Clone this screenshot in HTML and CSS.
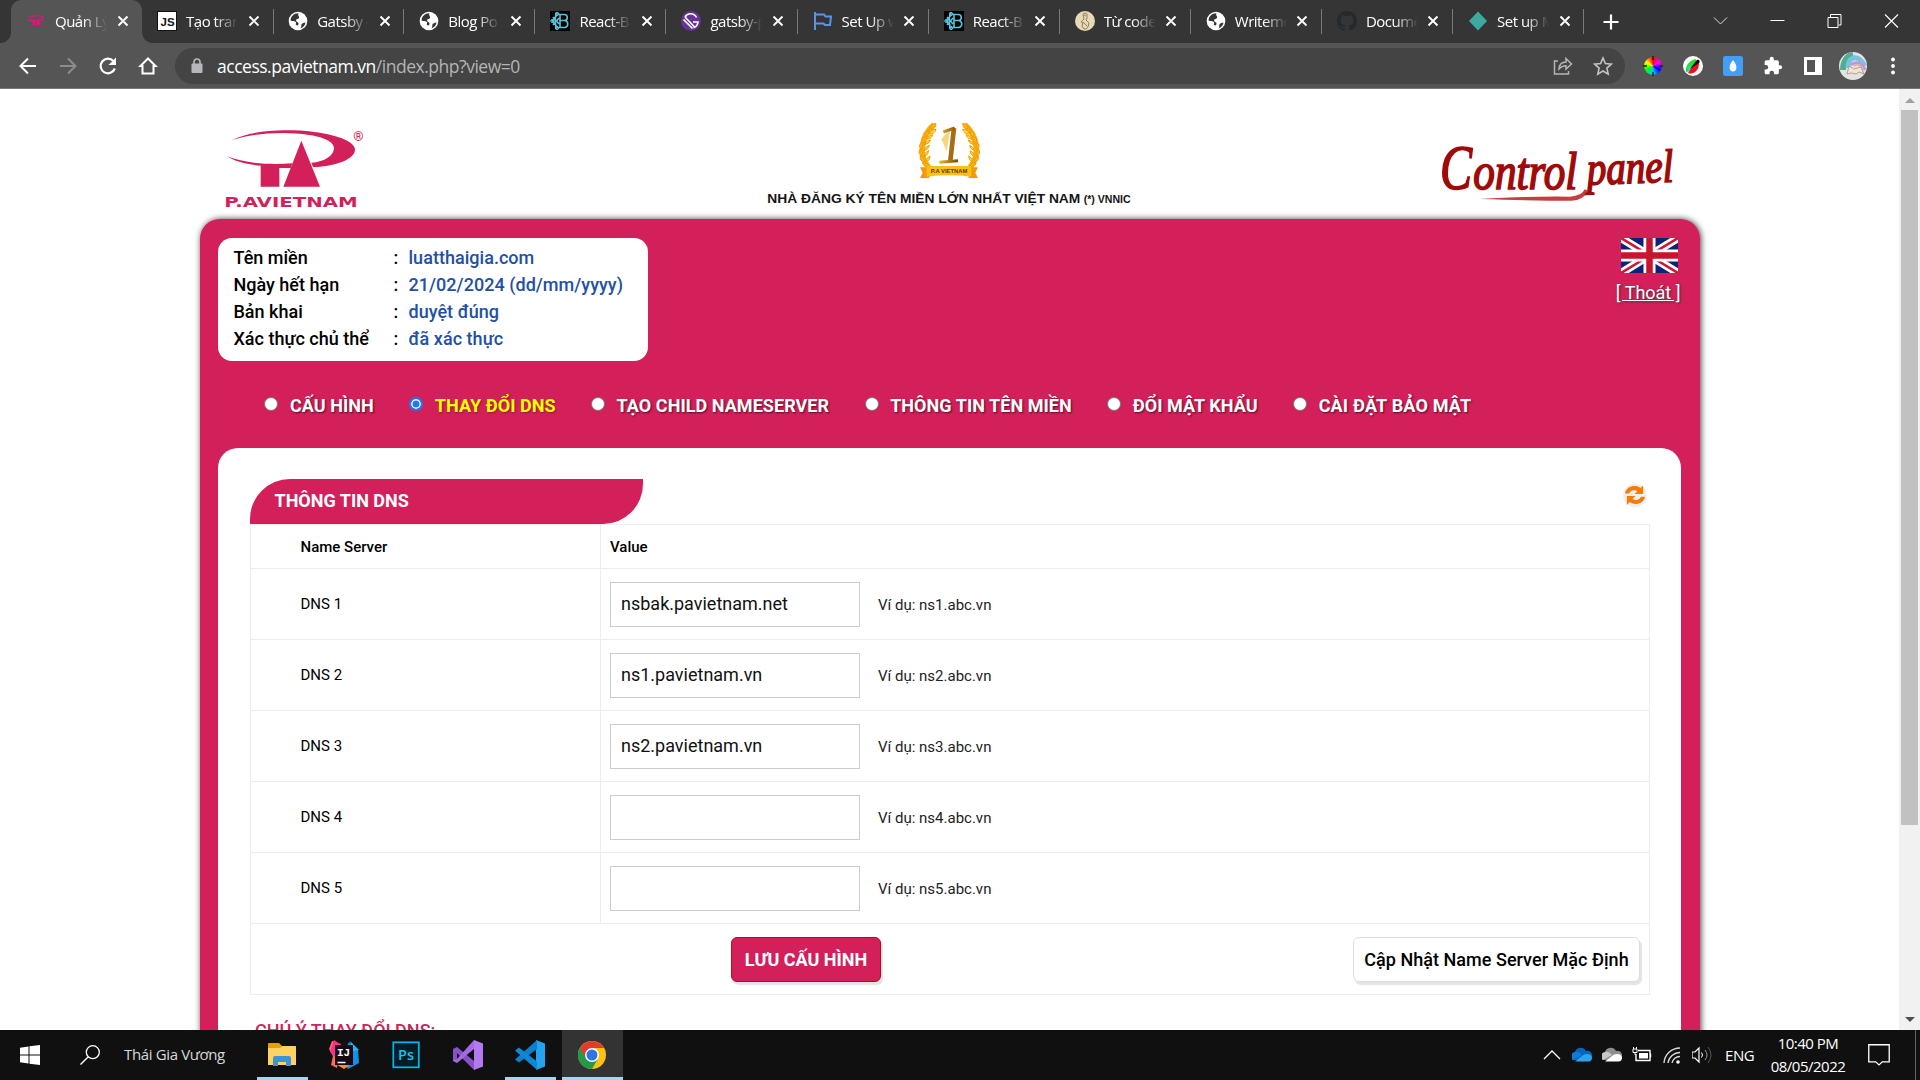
FILE: index.html
```html
<!DOCTYPE html>
<html lang="vi">
<head>
<meta charset="utf-8">
<title>Quản Lý</title>
<link rel="stylesheet" href="styles.css">
</head>
<body>
<svg class="defs" width="0" height="0">
  <symbol id="x" viewBox="0 0 12 12"><path d="M1.5 1.5l9 9M10.500 1.500l-9 9" stroke="#fff" stroke-width="1.9"/></symbol>
  <symbol id="globe" viewBox="0 0 20 20"><circle cx="10" cy="10" r="9.300" fill="#fff"/><path d="M10.500 2.200C6 2 2.500 5.500 2.600 9.500c1.500 1 3.600.3 5 1.300 1.500 1-.6 2.200.6 3.200 1 .7 2.300.6 2.300-1.500 0-1.700-2.500-1.500-2.400-3.300.1-1.800 2.800-.8 3-2.700.2-1.500-1.800-2.300-.6-4.300zM12.500 17.500c2.500-.8 4.700-3.200 5-6-1.500.6-3 .4-3.800 1.500-1 1.500.3 2.800-1.200 4.500z" fill="#353535"/></symbol>
  <symbol id="rb" viewBox="0 0 20 20"><path d="M0 0h20v20H0z" fill="#000"/><path d="M10 3.500h4.300a3 3 0 0 1 0 6H10zM10 9.500h5a3.600 3.600 0 0 1 0 7h-5zM10 3.500L6 2.600 5 9l1 8 4-.5M6.500 5L2 9.800l4.500 5M3 6l6 7M3 14l6-7" fill="none" stroke="#58c4dc" stroke-width="1.600"/><circle cx="7" cy="3" r="1.700" fill="none" stroke="#58c4dc"/><circle cx="7" cy="17" r="1.700" fill="none" stroke="#58c4dc"/><circle cx="2.200" cy="10" r="1.500" fill="none" stroke="#58c4dc"/></symbol>
  <symbol id="leaves" viewBox="0 0 80 150"><path d="M52 8C14 40 4 100 36 136" fill="none" stroke="#f7ae14" stroke-width="17"/><g fill="#fbb615" stroke="#f09d08" stroke-width="3"><path d="M58 4q-20 4-15 18q14-3 15-18zM42 14q-10 10 0 20q8-10 0-20zM34 26q-14 6-6 20q10-8 6-20zM22 44q-12 10 0 20q8-10 0-20zM16 62q-14 8-2 20q8-8 2-20zM10 82q-8 14 6 20q6-12-6-20zM12 102q-6 14 12 18q2-12-12-18zM18 122q0 12 20 12q-4-12-20-12z"/><path d="M58 22q-16 0-20 14q16 0 20-14zM48 38q-14 2-18 14q16-2 18-14zM42 54q-14 2-18 14q14-2 18-14zM38 70q-12 4-16 16q14-4 16-16zM36 86q-12 4-14 18q14-6 14-18zM40 102q-12 6-12 18q12-4 12-18z" fill="#ffdf3c"/></g></symbol>
</svg>

<header class="tabstrip">
  <div class="tab active">
    <svg class="fav" viewBox="0 0 20 20"><path d="M3 6.500c5-2.500 14-2.500 14 .7 0 3-8 3.600-15 1.800" fill="none" stroke="#e2157e" stroke-width="1.300"/><path d="M6.500 9h2.500v5H6.500zM10 14l2.200-7 2.800 7z" fill="#e2157e"/><path d="M2 16h16" stroke="#a02868"/></svg>
    <span class="label">Quản Lý</span><svg class="close"><use href="#x"/></svg>
  </div>
  <div class="tab plain">
    <svg class="fav" viewBox="0 0 20 20"><rect x=".5" y=".5" width="19" height="19" fill="#fff" stroke="#111"/><text x="3.500" y="14.500" font-size="11.500" font-weight="700" font-family="Liberation Sans,sans-serif" fill="#111">JS</text></svg>
    <span class="label">Tạo tran</span><svg class="close"><use href="#x"/></svg>
  </div>
  <div class="tab"><svg class="fav"><use href="#globe"/></svg><span class="label">Gatsby -</span><svg class="close"><use href="#x"/></svg></div>
  <div class="tab"><svg class="fav"><use href="#globe"/></svg><span class="label">Blog Po</span><svg class="close"><use href="#x"/></svg></div>
  <div class="tab"><svg class="fav"><use href="#rb"/></svg><span class="label">React-B</span><svg class="close"><use href="#x"/></svg></div>
  <div class="tab">
    <svg class="fav" viewBox="0 0 20 20"><circle cx="10" cy="10" r="10" fill="#663399"/><path d="M2.500 8.500L11.500 17.500M4 6l10 10.500M15.500 6.500A6.500 6.500 0 0 0 4 6M12 11h5c-.4 3-2 5-4.500 5.800" fill="none" stroke="#fff" stroke-width="1.700"/></svg>
    <span class="label">gatsby-p</span><svg class="close"><use href="#x"/></svg>
  </div>
  <div class="tab">
    <svg class="fav" viewBox="0 0 20 20"><path d="M2 1v18M2 3.500h9l1.500 2H18L17 14h-5l-1.500-1.500H2" fill="none" stroke="#5b93ec" stroke-width="2"/></svg>
    <span class="label">Set Up w</span><svg class="close"><use href="#x"/></svg>
  </div>
  <div class="tab"><svg class="fav"><use href="#rb"/></svg><span class="label">React-B</span><svg class="close"><use href="#x"/></svg></div>
  <div class="tab">
    <svg class="fav" viewBox="0 0 20 20"><circle cx="10" cy="10" r="10" fill="#e6d9b8"/><path d="M8 3q2-2 4 0v4l-1 2 3 3-1 4-2 2H9l-2-3 1-3-2-1 3-3zM9 4l2 1M8 11l4 4" fill="none" stroke="#8c7550" stroke-width=".9"/></svg>
    <span class="label">Từ code</span><svg class="close"><use href="#x"/></svg>
  </div>
  <div class="tab"><svg class="fav"><use href="#globe"/></svg><span class="label">Writemo</span><svg class="close"><use href="#x"/></svg></div>
  <div class="tab">
    <svg class="fav" viewBox="0 0 16 16"><path fill="#24292f" d="M8 0C3.580 0 0 3.580 0 8c0 3.540 2.290 6.530 5.470 7.590.4.070.55-.17.55-.38 0-.19-.01-.82-.01-1.490-2.010.37-2.530-.49-2.690-.94-.09-.23-.48-.94-.82-1.130-.28-.15-.68-.52-.01-.53.63-.01 1.080.58 1.230.82.72 1.210 1.870.87 2.330.66.07-.52.28-.87.51-1.070-1.780-.2-3.640-.89-3.640-3.950 0-.87.31-1.590.82-2.150-.08-.2-.36-1.020.08-2.120 0 0 .67-.21 2.200.82a7.600 7.600 0 0 1 4 0c1.530-1.040 2.200-.82 2.200-.82.44 1.100.16 1.920.08 2.120.51.56.82 1.270.82 2.150 0 3.070-1.870 3.750-3.650 3.950.29.25.54.73.54 1.480 0 1.070-.01 1.930-.01 2.200 0 .21.15.46.55.38A8.010 8.010 0 0 0 16 8c0-4.420-3.580-8-8-8z"/></svg>
    <span class="label">Docume</span><svg class="close"><use href="#x"/></svg>
  </div>
  <div class="tab">
    <svg class="fav" viewBox="0 0 20 20"><path d="M10 .5l9 9.500-9 9.500L1 10z" fill="#3cab9d"/></svg>
    <span class="label">Set up M</span><svg class="close"><use href="#x"/></svg>
  </div>
  <svg class="newtab" viewBox="0 0 16 16"><path d="M8 .5v15M.5 8h15" stroke="#fff" stroke-width="2.200"/></svg>
  <div class="winbtns">
    <svg viewBox="0 0 14 14"><path d="M.5 3.500L7 10l6.500-6.500" fill="none" stroke="#ddd"/></svg>
    <svg viewBox="0 0 14 14"><path d="M0 6.500h14" stroke="#fff"/></svg>
    <svg viewBox="0 0 14 14"><path d="M.5 3.500h10v10H.5zM3 3V.500h10.500V11H11" fill="none" stroke="#fff"/></svg>
    <svg viewBox="0 0 14 14"><path d="M.5.5l13 13m0-13l-13 13" stroke="#fff" stroke-width="1.100"/></svg>
  </div>
</header>

<nav class="toolbar">
  <svg class="nav" viewBox="0 0 20 20"><path d="M18 10H3m7-7.500L2.500 10l7.500 7.500" fill="none" stroke="#fff" stroke-width="2"/></svg>
  <svg class="nav" viewBox="0 0 20 20"><path d="M2 10h15m-7-7.500l7.500 7.500-7.500 7.500" fill="none" stroke="#8c8c8c" stroke-width="2"/></svg>
  <svg class="nav" viewBox="0 0 20 20"><path d="M16.800 12.500A7.300 7.300 0 1 1 15.300 5" fill="none" stroke="#fff" stroke-width="2.200"/><path d="M18 1.500V9h-7.500z" fill="#fff"/></svg>
  <svg class="nav" viewBox="0 0 20 20"><path d="M2.500 10L10 2.500l7.500 7.500h-2v7.500h-11V10z" fill="none" stroke="#fff" stroke-width="2"/></svg>
  <div class="omnibox">
    <svg class="lock" viewBox="0 0 12 16"><rect x=".5" y="5.500" width="11" height="9.500" rx="1" fill="#b4b8bd"/><path d="M3 6V4a3 3 0 0 1 6 0v2" fill="none" stroke="#b4b8bd" stroke-width="1.600"/></svg>
    <span class="url">access.pavietnam.vn<span>/index.php?view=0</span></span>
    <svg class="act" viewBox="0 0 20 20"><path d="M5 5H1.500v13h14v-3M6 13c.3-5 3-7 7-7V2.500L18.500 8 13 13V9.700c-3 0-5 .8-7 3.300z" fill="none" stroke="#b5b5b5" stroke-width="1.500"/></svg>
    <svg class="act" viewBox="0 0 20 20"><path d="M10 2l2.400 5.600 6 .5-4.500 4 1.300 6L10 15l-5.200 3.100 1.300-6-4.500-4 6-.5z" fill="none" stroke="#c4c4c4" stroke-width="1.600"/></svg>
  </div>
  <div class="exts">
    <div><svg class="cross" viewBox="0 0 20 20"><foreignObject x="1" y="1" width="18" height="18"><i class="wheel"></i></foreignObject><path d="M10 0v4M10 16v4M0 10h4M16 10h4" stroke="#222" stroke-width="1.500"/></svg></div>
    <div><svg viewBox="0 0 20 20"><circle cx="10" cy="10" r="10" fill="#fff"/><path d="M3 16C2 9 7 4 13 3c1 6-2 12-10 13z" fill="#2bdc35"/><path d="M4 17l2-7 3 1z" fill="#27d8ef"/><path d="M5 17c5 2 11-2 11-10l-3-1z" fill="#f00d15"/><path d="M7 13l6-8c2-3 5 0 3 2z" fill="#111"/></svg></div>
    <div><svg viewBox="0 0 20 20"><rect width="20" height="20" rx="2.500" fill="#41a0f5"/><path d="M10 4c5 6 4 11.500 0 11.500S5 10 10 4z" fill="#fff"/></svg></div>
    <div><svg viewBox="0 0 24 24"><path fill="#fff" d="M20.500 11H19V7a2 2 0 0 0-2-2h-4V3.500a2.500 2.500 0 0 0-5 0V5H4a2 2 0 0 0-2 2v3.800h1.500a2.700 2.700 0 0 1 0 5.400H2V20c0 1.100.9 2 2 2h3.800v-1.500a2.700 2.700 0 0 1 5.400 0V22H17a2 2 0 0 0 2-2v-4h1.500a2.500 2.500 0 0 0 0-5z"/></svg></div>
    <div><svg viewBox="0 0 20 20"><path d="M1 1h18v18H1zM4 4v12h8V4z" fill="#fff" fill-rule="evenodd"/></svg></div>
    <div><svg class="avatar" viewBox="0 0 28 28"><clipPath id="av"><circle cx="14" cy="14" r="14"/></clipPath><g clip-path="url(#av)"><path d="M0 0h28v28H0z" fill="#e4e2e3"/><path d="M4 18C4 8 10 3 14 2" fill="none" stroke="#4fae8e" stroke-width="6"/><path d="M9 16C9 5 18 1 26 14" fill="none" stroke="#7ac1e2" stroke-width="5"/><path d="M12 13c5-5 12-1 14 5" fill="none" stroke="#b79ad6" stroke-width="3"/><path d="M15 14c4-3 8 0 9 4" fill="none" stroke="#e3b0b8" stroke-width="2"/><path d="M8 22l2-8 5 3 7-2 3 7-5-2-3 2-5-1z" fill="#efe5d6" stroke="#a89078" stroke-width=".8"/></g></svg></div>
    <div><svg viewBox="0 0 20 20"><g fill="#fff"><circle cx="10" cy="3.500" r="1.900"/><circle cx="10" cy="10" r="1.900"/><circle cx="10" cy="16.500" r="1.900"/></g></svg></div>
  </div>
</nav>

<div class="viewport">
  <main class="page">
    <div class="banner">
      <svg class="logo" viewBox="72 0 426 327" width="142" height="109">
        <g fill="#d31f5a">
          <path d="M95 90C150 66 215 58 280 61c110 4 185 30 185 58 0 26-52 50-126 52l-5-13c40-2 68-22 68-44 0-26-60-44-150-45-70 0-112 8-157 21z"/>
          <path d="M81 139c50 20 120 26 196 21l-5 14h-34v56h-56v-63c-42-3-78-13-101-28z"/>
          <path d="M304 92l56 138H250z"/>
          <text x="73" y="291" font-family="DejaVu Sans,sans-serif" font-weight="700" font-size="44" textLength="400" lengthAdjust="spacingAndGlyphs">P.AVIETNAM</text>
          <text x="460" y="94" font-family="Roboto,sans-serif" font-size="36" font-weight="500" textLength="31" lengthAdjust="spacingAndGlyphs">®</text>
        </g>
      </svg>
      <svg class="award" viewBox="0 0 1260 327" width="420" height="109">
        <defs><linearGradient id="gold" x1="0" x2="1"><stop offset="0" stop-color="#f0b32a"/><stop offset=".5" stop-color="#b87a16"/><stop offset="1" stop-color="#7a4a08"/></linearGradient></defs>
        <use href="#leaves" x="530" y="36" width="80" height="150"/>
        <use href="#leaves" x="-726" y="36" width="80" height="150" transform="scale(-1 1)"/>
        <path d="M540 172h28v32h-28l8-16zM714 172h-28v32h28l-8-16z" fill="#f09a10"/>
        <path d="M560 168h134v32q-67-8-134 0z" fill="#fbbf16"/>
        <path d="M642 54L631 152" fill="none" stroke="#a56d14" stroke-width="14"/><path d="M610 66l34-12M598 157l56-5" fill="none" stroke="url(#gold)" stroke-width="9"/>
        <path d="M604 88q14-20 26-24l-10 60z" fill="#f3c44c" opacity=".7"/>
        <text x="572" y="190" font-family="Liberation Sans,sans-serif" font-weight="700" font-size="15" textLength="110" lengthAdjust="spacingAndGlyphs" fill="#5d3c05">P.A VIETNAM</text>
        <g font-family="Liberation Sans,sans-serif" font-weight="700" fill="#151515">
          <text x="82" y="280" font-size="39" textLength="939" lengthAdjust="spacingAndGlyphs">NHÀ ĐĂNG KÝ TÊN MIỀN LỚN NHẤT VIỆT NAM</text>
          <text x="1031" y="280" font-size="30" textLength="141" lengthAdjust="spacingAndGlyphs">(*) VNNIC</text>
        </g>
      </svg>
      <svg class="cpanel" viewBox="120 0 720 327" width="240" height="109">
        <g fill="#a00a08" stroke="#a00a08" stroke-width="5" font-family="Liberation Serif,serif" font-style="italic">
          <text x="120" y="238" font-size="188" textLength="96" lengthAdjust="spacingAndGlyphs">C</text>
          <text x="220" y="238" font-size="156" textLength="312" lengthAdjust="spacingAndGlyphs">ontrol</text>
          <text x="562" y="224" font-size="140" textLength="260" lengthAdjust="spacingAndGlyphs" transform="rotate(-2 558 226)">panel</text>
        </g>
        <path d="M240 267Q400 258 510 260q36-2 44-22l10 4q-12 28-50 30-110 0-274-5z" fill="#b5201c" opacity=".85"/>
      </svg>
    </div>

    <section class="panel">
      <div class="top">
        <dl class="info">
          <dt>Tên miền</dt><dd>luatthaigia.com</dd>
          <dt>Ngày hết hạn</dt><dd>21/02/2024 (dd/mm/yyyy)</dd>
          <dt>Bản khai</dt><dd>duyệt đúng</dd>
          <dt>Xác thực chủ thể</dt><dd>đã xác thực</dd>
        </dl>
        <div class="session">
          <svg viewBox="0 0 57 35" width="57" height="35"><path d="M0 0h57v35H0z" fill="#10217c"/><path d="M0 0l57 35M57 0L0 35" stroke="#fff" stroke-width="8"/><path d="M0 0l28 17M57 0L29 17M57 35L29 18M0 35l28-17" stroke="#cf1530" stroke-width="2.600"/><path d="M28.500 0v35M0 17.500h57" stroke="#fff" stroke-width="12"/><path d="M28.500 0v35M0 17.500h57" stroke="#c8152d" stroke-width="6.500"/></svg>
          <a class="logout">[ Thoát ]</a>
        </div>
      </div>
      <div class="menu">
        <label><i></i>CẤU HÌNH</label>
        <label class="on"><i></i>THAY ĐỔI DNS</label>
        <label><i></i>TẠO CHILD NAMESERVER</label>
        <label><i></i>THÔNG TIN TÊN MIỀN</label>
        <label><i></i>ĐỔI MẬT KHẨU</label>
        <label class="last"><i></i>CÀI ĐẶT BẢO MẬT</label>
      </div>
      <div class="card">
        <div class="cardhead">
          <h2>THÔNG TIN DNS</h2>
          <svg class="refresh" viewBox="0 0 24 24" width="26" height="26"><circle cx="12" cy="12.500" r="11" fill="#efeff1"/><path d="M2.800 10.500C4 4 12 2 17 5.500l2.500-2.300V11h-7.800l2.500-2.500C11 6.500 7.500 8 6.500 10.500zM21.200 13.500C20 20 12 22 7 18.500l-2.500 2.800V13h7.800l-2.500 2.600c3.200 2 6.700.4 7.700-2.100z" fill="#f97b07"/></svg>
        </div>
        <div class="grid">
          <div class="row head"><b>Name Server</b><b>Value</b></div>
          <div class="row"><span>DNS 1</span><div><div class="input">nsbak.pavietnam.net</div><em>Ví dụ: ns1.abc.vn</em></div></div>
          <div class="row"><span>DNS 2</span><div><div class="input">ns1.pavietnam.vn</div><em>Ví dụ: ns2.abc.vn</em></div></div>
          <div class="row"><span>DNS 3</span><div><div class="input">ns2.pavietnam.vn</div><em>Ví dụ: ns3.abc.vn</em></div></div>
          <div class="row"><span>DNS 4</span><div><div class="input"></div><em>Ví dụ: ns4.abc.vn</em></div></div>
          <div class="row"><span>DNS 5</span><div><div class="input"></div><em>Ví dụ: ns5.abc.vn</em></div></div>
          <div class="actions"><div class="btn save">LƯU CẤU HÌNH</div><div class="btn reset">Cập Nhật Name Server Mặc Định</div></div>
        </div>
        <h3>CHÚ Ý THAY ĐỔI DNS:</h3>
      </div>
    </section>
  </main>
  <div class="scroll"><i class="up"></i><i class="thumb"></i><i class="down"></i></div>
</div>

<footer class="taskbar">
  <div class="slot start"><svg viewBox="0 0 20 20" width="20" height="20"><path d="M0 2.800L8.500 1.500v8H0zM9.500 1.300L20 0v9.500H9.500zM0 10.500h8.500v8L0 17.200zM9.500 10.500H20V20L9.500 18.700z" fill="#fff"/></svg></div>
  <div class="slot search"><svg viewBox="0 0 20 20" width="20" height="20"><circle cx="12.800" cy="7.200" r="6.500" fill="none" stroke="#fff" stroke-width="1.300"/><path d="M8.300 11.800L.5 19.500" stroke="#fff" stroke-width="1.400"/></svg></div>
  <div class="user">Thái Gia Vương</div>
  <div class="app run"><svg viewBox="0 0 30 30"><path d="M1 4q0-1 1-1h10l3 3h13q1 0 1 1v6H1z" fill="#e59f0b"/><path d="M1 8h12l3-2h12q1 0 1 1v18H1z" fill="#fdd262"/><path d="M6 26v-8q0-2 2-2h14q2 0 2 2v8h-5v-4h-8v4z" fill="#3c93da"/></svg></div>
  <div class="app"><svg viewBox="0 0 30 30"><path d="M3 1l9 3L8 28l-6-3 2-9-4-7z" fill="#fd6b50"/><path d="M5 0l10 7-10 9-4-4z" fill="#fe2d8e"/><path d="M20 2l9 8 1 13-11 6-8-9z" fill="#1391e8"/><path d="M21 1l3 10 6-1z" fill="#21b8f5"/><path d="M3 22l12 7 6-4-4-4z" fill="#f98b32"/><path d="M6 5h18v20H6z" fill="#170a17"/><path d="M8.500 22.500h8" stroke="#fff" stroke-width="1.500"/><text x="8" y="15.500" font-family="Liberation Mono,monospace" font-weight="700" font-size="11" fill="#fff">IJ</text></svg></div>
  <div class="app"><svg viewBox="0 0 30 30"><rect x="2.300" y="2.300" width="25.500" height="25" fill="#001c26" stroke="#00b8ee" stroke-width="1.700"/><text x="7" y="20" font-family="Open Sans,sans-serif" font-weight="600" font-size="14.500" fill="#12c5f5">Ps</text></svg></div>
  <div class="app"><svg viewBox="0 0 30 30"><path d="M21 0l9 3.500v23L21 30z" fill="#b37af0"/><path d="M0 9l4-2 17 14v9L4 13v6L0 21z" fill="#8751c9"/><path d="M21 0v9L4 23l-4-2v-1l4-1z" fill="#a36be2"/></svg></div>
  <div class="app run"><svg viewBox="0 0 30 30"><path d="M21 0l9 3.500v23L21 30z" fill="#24a3ee"/><path d="M22 0v9L4 22.500 0 19.500z" fill="#0f7fcd"/><path d="M0 10.500L4 7.500l18 14V30z" fill="#0d88d6"/></svg></div>
  <div class="app run current"><svg viewBox="0 0 30 30"><circle cx="15" cy="15" r="14" fill="#fbc116"/><path d="M15 15L2.900 8A14 14 0 0 1 27.100 8H15z" fill="#e33b2e"/><path d="M15 15L2.900 8A14 14 0 0 0 15 29l6-10.500z" fill="#24994a"/><path d="M2.900 8L9 18.500 15 8z" fill="#e33b2e"/><path d="M2.900 8l6 10.500 6 3L11 28.500A14 14 0 0 1 2.900 8z" fill="#24994a"/><circle cx="15" cy="15" r="7" fill="#fff"/><circle cx="15" cy="15" r="5.500" fill="#2d74e8"/></svg></div>
  <div class="tray">
    <svg viewBox="0 0 20 20"><path d="M2 14l8-8 8 8" fill="none" stroke="#fff" stroke-width="1.300"/></svg>
    <svg viewBox="0 0 20 20"><path d="M1 15a4.500 4.500 0 0 1 2-8 6 6 0 0 1 11-1 5 5 0 0 1 4 9z" fill="#0a64b8"/><path d="M1 15a4.500 4.500 0 0 1 2-8q4-1 7 3z" fill="#0e7cdc"/><path d="M3 16.500L12 9.500q7-2 8 3 0 4-3.500 4z" fill="#29a5ec"/></svg>
    <svg viewBox="0 0 20 20"><path d="M1 15a4.500 4.500 0 0 1 2-8 6 6 0 0 1 11-1 5 5 0 0 1 4 9z" fill="#8e8e8e"/><path d="M1 15a4.500 4.500 0 0 1 2-8q4-1 7 3z" fill="#c8c8c8"/><path d="M3 16.500L12 9.500q7-2 8 3 0 4-3.500 4z" fill="#fff"/></svg>
    <svg viewBox="0 0 20 20"><path d="M6 5.500h12v10H4V9M18.500 8.500v4" fill="none" stroke="#fff" stroke-width="1.400"/><path d="M7 8h9v5.500H7z" fill="#fff"/><path d="M1 4h4v3.500H1zM1.500 2v2M4.500 2v2M3 7v3" stroke="#fff" fill="none"/></svg>
    <svg viewBox="0 0 20 20"><g fill="none" stroke="#ddd" stroke-width="1.300"><path d="M2 18A16 16 0 0 1 18 3M6 18A12 12 0 0 1 18 7.500M10 18a8 8 0 0 1 8-6.500"/></g><circle cx="16" cy="17" r="1.800" fill="#fff"/></svg>
    <svg viewBox="0 0 20 20"><path d="M0 7h3l4-4v14l-4-4H0z" fill="none" stroke="#fff" stroke-width="1.200"/><path d="M9.500 7.500q2 2.500 0 5" fill="none" stroke="#fff"/><path d="M13 5q4 5 0 10" fill="none" stroke="#999"/><path d="M16 2q6 8 0 16" fill="none" stroke="#555"/></svg>
  </div>
  <div class="lang">ENG</div>
  <div class="clock">10:40 PM<br>08/05/2022</div>
  <svg class="notif" viewBox="0 0 20 20" width="22" height="22"><path d="M.7.7h18.600v15.500H13L10 19l-3-2.800H.7z" fill="none" stroke="#fff" stroke-width="1.200"/></svg>
  <div class="peek"></div>
</footer>
</body>
</html>
```
FILE: styles.css
```css
* { box-sizing: border-box; }
body { margin: 0; width: 1920px; height: 1080px; overflow: hidden; display: flex; flex-direction: column; font-family: Roboto, sans-serif; background: #fff; }
svg { display: block; flex: none; }
.defs { position: absolute; }
h2, h3, dl, dt, dd { margin: 0; }

.tabstrip { height: 43px; flex: none; background: #353535; display: flex; align-items: center; padding-left: 11px; font: 15px "Open Sans", sans-serif; color: #fff; }
.tab { width: 131.1px; height: 43px; flex: none; display: flex; align-items: center; padding: 0 0 1px 15px; position: relative; }
.tab::after { content: ""; position: absolute; right: 0; top: 9px; width: 1px; height: 25px; background: #797979; }
.plain::after { right: -1px; }
.active::after, .active::before { content: ""; position: absolute; top: auto; bottom: 0; width: 10px; height: 10px; }
.active::after { right: -10px; background: radial-gradient(circle at 100% 0, transparent 9.500px, #555 10px); }
.active::before { left: -10px; background: radial-gradient(circle at 0 0, transparent 9.500px, #555 10px); }
.active { background: #555; border-radius: 10px 10px 0 0; }
.fav { width: 20px; height: 20px; }
.label { width: 52px; margin: 0 9.500px 0 9px; overflow: hidden; white-space: nowrap; letter-spacing: -.5px; -webkit-mask-image: linear-gradient(90deg, #000 55%, transparent 100%); mask-image: linear-gradient(90deg, #000 55%, transparent 100%); }
.close { width: 12px; height: 12px; }
.newtab { width: 16px; height: 16px; margin-left: 19px; }
.winbtns { margin-left: auto; display: flex; height: 37px; }
.winbtns svg { width: 57px; height: 14px; margin-top: 11px; }

.toolbar { height: 46px; flex: none; background: #555; border-bottom: 1px solid #777; display: flex; align-items: center; padding-left: 18px; }
.nav { width: 20px; height: 20px; margin-right: 20px; }
.omnibox { width: 1450px; height: 36px; margin-left: -3px; border-radius: 18px; background: #444; display: flex; align-items: center; padding: 0 12.500px 0 16px; }
.lock { width: 12px; height: 16px; }
.url { margin: 0 auto 0 14px; font: 17.5px "Open Sans", sans-serif; letter-spacing: -.48px; color: #fff; }
.url span { color: #b5b5b5; }
.act { width: 20px; height: 20px; margin-left: 20px; }
.exts { margin-left: 7.500px; display: flex; }
.exts div { width: 40px; height: 28px; display: flex; align-items: center; justify-content: center; }
.exts svg { width: 20px; height: 20px; }
.exts .avatar { width: 28px; height: 28px; }
.wheel { display: block; width: 18px; height: 18px; border-radius: 50%; background: conic-gradient(#f00, #f0f, #00f, #0cf, #0f0, #ff0, #f00); }

.viewport { height: 941px; flex: none; display: flex; overflow: hidden; }
.page { width: 1899px; flex: none; padding-left: 200px; }
.banner { height: 130px; padding: 21px 0 0 24px; display: flex; }
.award { margin-left: 374px; }
.cpanel { margin-left: 280px; }

.panel { width: 1500px; height: 1000px; background: #d31f5a; border-radius: 20px; box-shadow: 1px 0 6px rgba(0, 0, 0, .75); padding: 19px 19px 0 18px; }
.top { height: 123px; display: flex; justify-content: space-between; }
.info { width: 430px; background: #fff; border-radius: 14px; display: grid; grid-template-columns: 160px 1fr; grid-auto-rows: 27px; padding: 6px 0 0 15.500px; font-size: 18px; font-weight: 500; line-height: 27px; }
.info dd { color: #2350a4; display: flex; letter-spacing: .03px; }
.info dd::before { content: ":"; width: 15px; color: #000; }
.session { display: flex; flex-direction: column; align-items: flex-end; }
.session svg { margin-right: 3px; }
.logout { margin: 9px .5px 0 0; font-size: 18px; line-height: 21px; color: #fff; text-decoration: underline; text-shadow: 1px 1px 2px #333; }
.menu { height: 87px; padding: 33px 0 0 46px; display: flex; gap: 35.500px; font-size: 18px; font-weight: 700; line-height: 24px; letter-spacing: .05px; color: #fff; text-shadow: 1px 1px 2px rgba(0, 0, 0, .6); }
.menu label { display: flex; white-space: nowrap; }
.menu i { width: 14px; height: 14px; margin: 3px 12px 0 0; border-radius: 50%; background: #fff; border: 1px solid #777; }
.menu label + label i { margin-right: 11.500px; }
.menu .last { letter-spacing: .18px; }
.menu .on { color: #ff0; text-shadow: 1px 1px 2px rgba(0, 0, 0, .3); }
.menu .on i { background: #2675f5; border: 2px solid #2675f5; box-shadow: inset 0 0 0 1.500px #fff; }

.card { background: #fff; height: 800px; border-radius: 20px 20px 0 0; padding: 31px 31px 0 32px; }
.cardhead { height: 45px; display: flex; justify-content: space-between; }
.cardhead h2 { width: 393px; background: #d31f5a; color: #fff; border-radius: 40px 0; font-size: 18px; line-height: 44px; padding-left: 24.500px; }
.refresh { margin: 3px 2px 0 0; }
.grid { border: 1px solid #ececec; height: 471px; font-size: 15px; color: #000; }
.row { display: grid; grid-template-columns: 350px 1fr; height: 71px; border-bottom: 1px solid #ececec; }
.row > * { display: flex; align-items: center; padding-left: 9px; }
.row > :first-child { padding-left: 49.500px; border-right: 1px solid #ececec; }
.head { height: 44px; }
.head b { font-weight: 500; }
.input { width: 250px; height: 45px; border: 1px solid #ccc; padding-left: 10px; font-size: 18px; line-height: 41px; color: #111; }
.row em { font-style: normal; margin: 2px 0 0 18px; color: #222; }
.actions { height: 71px; display: flex; align-items: center; justify-content: space-between; padding: 0 9px 0 480px; }
.btn { height: 45px; line-height: 43px; text-align: center; border-radius: 6px; font-size: 18px; white-space: nowrap; box-shadow: 2px 3px 1px #e4e4e4; }
.save { width: 150px; background: #d31f5a; border: 1px solid #b50b14; color: #fff; font-weight: 700; }
.reset { width: 287px; background: #fff; border: 1px solid #ddd; color: #000; font-weight: 500; letter-spacing: .03px; }
.card h3 { margin: 24px 0 0 5px; font-size: 18px; font-weight: 500; line-height: 24px; color: #d31f5a; }

.scroll { width: 21px; flex: none; background: #f1f1f1; display: flex; flex-direction: column; align-items: center; }
.up, .down { border: 5px solid transparent; }
.up { border-bottom-color: #a0a0a0; margin-top: 4px; }
.thumb { width: 17px; height: 715px; margin-top: 7px; background: #c1c1c1; }
.down { border-top-color: #505050; margin-top: auto; margin-bottom: 3px; }

.taskbar { height: 50px; flex: none; background: #101010; display: flex; align-items: center; color: #fff; font: 15px "Open Sans", sans-serif; }
.start { margin-left: 20px; }
.search { margin-left: 40px; }
.user { width: 133px; margin: -2px 0 0 24px; font-size: 15px; letter-spacing: -.35px; color: #d8d8d8; white-space: nowrap; }
.app { width: 51px; height: 50px; margin-right: 11px; padding: 0 1px 1px 0; display: flex; align-items: center; justify-content: center; position: relative; }
.app svg { width: 30px; height: 30px; }
.run::after { content: ""; position: absolute; left: 0; right: 0; bottom: 0; height: 3px; background: #a6d4f5; }
.current { width: 61px; margin: 0 0 0 -5px; background: #333; }
.tray { margin-left: 919px; display: flex; gap: 10px; }
.tray svg { width: 20px; height: 20px; }
.lang { width: 30px; margin-left: 13px; letter-spacing: -.4px; }
.clock { width: 90px; margin: -1px 0 0 8px; text-align: center; line-height: 23px; font-size: 15px; letter-spacing: -.5px; }
.notif { margin-left: 15px; }
.peek { width: 1px; height: 50px; margin-left: 25px; background: #666; }
```
